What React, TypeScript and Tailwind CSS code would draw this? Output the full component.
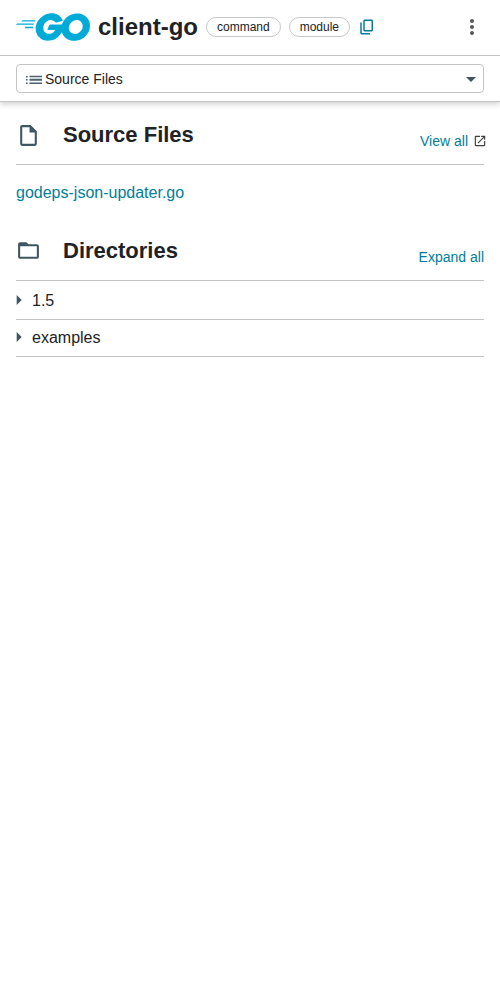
import { useState } from "react";

function GoLogo() {
  return (
    <svg viewBox="0 0 205.4 76.7" className="block h-7 w-[74px] shrink-0" fill="#00acd7" role="img" aria-label="Go">
      <path d="M15.5 23.2c-.4 0-.5-.2-.3-.5l2.1-2.7c.2-.3.7-.5 1.1-.5h35.7c.4 0 .5.3.3.6l-1.7 2.6c-.2.3-.7.6-1 .6l-36.2-.1zM.4 32.4c-.4 0-.5-.2-.3-.5l2.1-2.7c.2-.3.7-.5 1.1-.5h45.6c.4 0 .6.3.5.6l-.8 2.4c-.1.4-.5.6-.9.6l-47.3.1zM24.6 41.6c-.4 0-.5-.3-.3-.6l1.4-2.5c.2-.3.6-.6 1-.6h20c.4 0 .6.3.6.7l-.2 2.4c0 .4-.4.7-.7.7l-21.8-.1z" />
      <path d="M128.4 21.4c-6.3 1.6-10.6 2.8-16.8 4.4-1.5.4-1.6.5-2.9-1-1.5-1.7-2.6-2.8-4.7-3.8-6.3-3.1-12.4-2.2-18.1 1.5-6.8 4.4-10.3 10.9-10.2 19 .1 8 5.6 14.6 13.5 15.7 6.8.9 12.5-1.5 17-6.6.9-1.1 1.7-2.3 2.7-3.7H89.6c-2.1 0-2.6-1.3-1.9-3 1.3-3.1 3.7-8.3 5.1-10.9.3-.6 1-1.6 2.5-1.6h36.4c-.2 2.7-.2 5.4-.6 8.1-1.1 7.2-3.8 13.8-8.2 19.6-7.2 9.5-16.6 15.4-28.5 17-9.8 1.3-18.9-.6-26.9-6.6-7.4-5.6-11.6-13-12.7-22.2-1.3-10.9 1.9-20.7 8.5-29.3C70.6 8.7 80 2.8 91.5.7c9.4-1.7 18.4-.6 26.5 4.9 5.3 3.5 9.1 8.3 11.6 14.1.6.9.2 1.4-1.2 1.7z" />
      <path d="M161.5 76.7c-9.1-.2-17.4-2.8-24.4-8.8-5.9-5.1-9.6-11.6-10.8-19.3-1.8-11.3 1.3-21.3 8.1-30.2 7.3-9.6 16.1-14.6 28-16.7 10.2-1.8 19.8-.8 28.5 5.1 7.9 5.4 12.8 12.7 14.1 22.3 1.7 13.5-2.2 24.5-11.5 33.9-6.6 6.7-14.7 10.9-24 12.8-2.7.5-5.4.6-8 .9zm23.8-40.4c-.1-1.3-.1-2.3-.3-3.3-1.8-9.9-10.9-15.5-20.4-13.3-9.3 2.1-15.3 8-17.5 17.4-1.8 7.8 2 15.7 9.2 18.9 5.5 2.4 11 2.1 16.3-.6 7.9-4.1 12.2-10.5 12.7-19.1z" />
    </svg>
  );
}

function Icon({ d, className }: { d: string; className: string }) {
  return (
    <svg viewBox="0 0 24 24" className={className} fill="currentColor" aria-hidden="true">
      <path d={d} />
    </svg>
  );
}

const COPY = "M16 20H5V6H3v14c0 1.100.9 2 2 2h11v-2zM20 16V4c0-1.100-.9-2-2-2H9c-1.100 0-2 .9-2 2v12c0 1.100.9 2 2 2h9c1.100 0 2-.9 2-2zm-2 0H9V4h9v12z";
const MORE = "M12 8c1.100 0 2-.9 2-2s-.9-2-2-2-2 .9-2 2 .9 2 2 2zm0 2c-1.100 0-2 .9-2 2s.9 2 2 2 2-.9 2-2-.9-2-2-2zm0 6c-1.100 0-2 .9-2 2s.9 2 2 2 2-.9 2-2-.9-2-2-2z";
const FILE = "M14 2H6c-1.100 0-2 .9-2 2v16c0 1.100.9 2 2 2h12c1.100 0 2-.9 2-2V8l-6-6zM6 20V4h7v5h5v11H6z";
const FOLDER = "M20 6h-8l-2-2H4c-1.100 0-2 .9-2 2v12c0 1.100.9 2 2 2h16c1.100 0 2-.9 2-2V8c0-1.100-.9-2-2-2zm0 12H4V8h16v10z";
const LAUNCH = "M19 19H5V5h7V3H5c-1.110 0-2 .9-2 2v14c0 1.100.89 2 2 2h14c1.100 0 2-.9 2-2v-7h-2v7zM14 3v2h3.590l-9.830 9.830 1.410 1.410L19 6.410V10h2V3h-7z";

function Pill({ children }: { children: string }) {
  return (
    <span className="flex h-5 items-center rounded-full border border-[#c6c8ca] px-2.5 text-xs leading-4">
      {children}
    </span>
  );
}

function Directory({ name, open, onToggle }: { name: string; open: boolean; onToggle: () => void }) {
  return (
    <li className="border-b border-[#c4c4c4]">
      <button type="button" aria-expanded={open} onClick={onToggle} className="flex h-9 w-full items-center gap-2.5 text-left text-base">
        <svg viewBox="0 0 6 12" className={open ? "h-3 w-1.5 rotate-90" : "h-3 w-1.5"} fill="#3e5762" aria-hidden="true">
          <path d="M0.700 0v10L5.700 5z" />
        </svg>
        {name}
      </button>
    </li>
  );
}

const DIRECTORIES = ["1.5", "examples"];

export default function App() {
  const [open, setOpen] = useState<string[]>([]);
  const allOpen = open.length === DIRECTORIES.length;
  const toggle = (name: string) =>
    setOpen(open.includes(name) ? open.filter((n) => n !== name) : [...open, name]);

  return (
    <div className="min-h-screen bg-white font-['Liberation_Sans',Arial,sans-serif] text-[#202224]">
      <header className="bg-white shadow-[0_2px_6px_rgba(0,0,0,0.2)]">
        <div className="flex h-14 items-center border-b border-[#c4c4c4] px-4 pb-0.5">
          <a href="#home" aria-label="Go home">
            <GoLogo />
          </a>
          <h1 className="ml-2 text-2xl leading-8 font-bold whitespace-nowrap">client-go</h1>
          <div className="ml-2 flex gap-2">
            <Pill>command</Pill>
            <Pill>module</Pill>
          </div>
          <button type="button" aria-label="Copy path" className="ml-2 text-[#007d9c]">
            <Icon d={COPY} className="size-[18px]" />
          </button>
          <button type="button" aria-label="More" className="ml-auto text-[#555759]">
            <Icon d={MORE} className="size-6" />
          </button>
        </div>
        <div className="border-b border-[#c4c4c4] px-4 py-2">
          <div className="relative">
            <select aria-label="Section" className="block h-[29px] w-full appearance-none rounded border border-[#c4c4c4] bg-white pr-8 pl-7 text-sm">
              <option>Source Files</option>
              <option>Directories</option>
            </select>
            <svg viewBox="0 0 16 9" className="pointer-events-none absolute top-[11px] left-2.5 h-[9px] w-4" fill="#4b626c" aria-hidden="true">
              <path d="M0 1h1.600v1.400H0zM0 4h1.600v1.600H0zM0 7.600h1.600V9H0zM3.500 .7H16v1.600H3.500zM3.500 3.700H16v2H3.500zM3.500 7.400H16V9H3.500z" />
            </svg>
            <svg viewBox="0 0 10 5" className="pointer-events-none absolute top-[13px] right-2 h-[5px] w-2.5" fill="#3e5762" aria-hidden="true">
              <path d="M0 0h10L5 5z" />
            </svg>
          </div>
        </div>
      </header>

      <main className="px-4">
        <section>
          <div className="flex h-[63px] items-center border-b border-[#c4c4c4] pt-1">
            <Icon d={FILE} className="size-[25px] text-[#3e5762]" />
            <h2 className="ml-[22px] text-[22px] leading-7 font-bold">Source Files</h2>
            <a href="#all" className="mt-3 -mr-[3px] ml-auto flex items-center gap-[5px] text-sm text-[#007d9c]">
              View all
              <Icon d={LAUNCH} className="size-3.5 text-[#3e4042]" />
            </a>
          </div>
          <a href="#godeps" className="mt-4 block text-base leading-6 text-[#007d9c]">
            godeps-json-updater.go
          </a>
        </section>
        <section className="mt-3">
          <div className="flex h-16 items-center border-b border-[#c4c4c4] pt-1">
            <Icon d={FOLDER} className="size-[25px] text-[#3e5762]" />
            <h2 className="ml-[22px] text-[22px] leading-7 font-bold">Directories</h2>
            <button type="button" onClick={() => setOpen(allOpen ? [] : DIRECTORIES)} className="mt-3 ml-auto text-sm text-[#007d9c]">
              {allOpen ? "Collapse all" : "Expand all"}
            </button>
          </div>
          <ul className="pt-0.5">
            {DIRECTORIES.map((name) => (
              <Directory key={name} name={name} open={open.includes(name)} onToggle={() => toggle(name)} />
            ))}
          </ul>
        </section>
      </main>
    </div>
  );
}
